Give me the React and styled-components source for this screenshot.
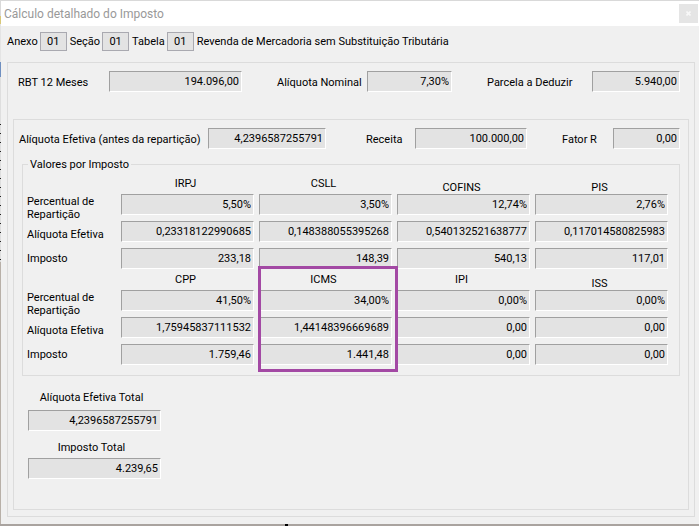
import { useId } from "react";
import styled, { createGlobalStyle, ThemeProvider } from "styled-components";

const theme = {
  colors: {
    face: "#f0f0f0",
    field: "#e3e3e3",
    line: "#dcdcdc",
    shadow: "#a0a0a0",
    title: "#999999",
    mark: "#a349a4",
  },
  fontsize: {
    md: "11px",
    lg: "12px",
  },
};

const GlobalStyle = createGlobalStyle`
  * {
    box-sizing: border-box;
  }

  body {
    margin: 0;
    background: #b8b0a8;
    color: #000;
    font-family: Tahoma, Roboto, sans-serif;
    font-size: ${theme.fontsize.md};
    line-height: 13px;
  }
`;

/* what shows of the screen behind the window */
const Desktop = styled.div`
  padding: 1px 0 2px 1px;
  background:
    linear-gradient(#000, #000) 41% 100% / 3px 2px no-repeat,
    linear-gradient(#a9a39f, #a9a39f) 0 100% / 100% 2px no-repeat,
    repeating-linear-gradient(transparent 0 8px, #222 8px 9px) 0 116px / 1px 146px no-repeat,
    linear-gradient(
      #d9d9d9 0 16px,
      #d8c878 16px 24px,
      #e4e4e4 24px 62px,
      #6f8fc0 62px 77px,
      #dedede 77px 262px,
      #b8b0a8 262px
    );
`;

const Window = styled.main`
  background: ${({ theme }) => theme.colors.face};
`;

const TitleBar = styled.header`
  display: flex;
  align-items: center;
  justify-content: space-between;
  height: 25px;
  padding: 0 1px 0 3px;
  background: #fff;
`;

const Title = styled.h1`
  margin: 0;
  color: ${({ theme }) => theme.colors.title};
  font-family: "Segoe UI", Roboto, sans-serif;
  font-size: ${({ theme }) => theme.fontsize.lg};
  font-weight: 400;
  line-height: 16px;
`;

const CloseButton = styled.button`
  display: flex;
  align-items: center;
  justify-content: center;
  width: 19px;
  height: 19px;
  padding: 0;
  border: 0;
  background: #e5e5e5;
`;

const Body = styled.div`
  padding: 6px 4px 7px 6px;
`;

const CodeBar = styled.div`
  display: flex;
  align-items: center;
  gap: 3px;
`;

const CodeLabel = styled.label`
  display: flex;
  align-items: center;
  gap: 2px;
`;

const CodeInput = styled.input`
  width: 27px;
  height: 19px;
  padding: 0;
  border: 1px solid #a9a9b0;
  background: ${({ theme }) => theme.colors.field};
  color: inherit;
  font: inherit;
  text-align: center;
  outline: none;
`;

const Panel = styled.section`
  margin-top: 11px;
  padding: 8px 5px 6px;
  border: 1px solid ${({ theme }) => theme.colors.line};
`;

const InnerPanel = styled.section`
  margin-top: 27px;
  padding: 8px 8px 30px 5px;
  border: 1px solid ${({ theme }) => theme.colors.line};
`;

const FieldRow = styled.div`
  display: grid;
  grid-template-columns: ${({ $columns }) => $columns};
  align-items: center;
  padding: ${({ $padding }) => $padding || 0};
`;

const Label = styled.label`
  padding-left: ${({ $inset }) => $inset || 0}px;
  padding-top: 2px;
  white-space: nowrap;
`;

const ValueInput = styled.input`
  width: 100%;
  min-width: 0;
  height: 21px;
  padding: 0 2px;
  border: 1px solid;
  border-color: ${({ theme }) => theme.colors.shadow} #fff #fff
    ${({ theme }) => theme.colors.shadow};
  background: ${({ theme }) => theme.colors.field};
  color: inherit;
  font: inherit;
  text-align: right;
  outline: none;
`;

const TaxGroup = styled.fieldset`
  min-width: 0;
  margin: 9px 0 0 3px;
  padding: 2px 11px 10px 4px;
  border: 1px solid ${({ theme }) => theme.colors.line};
`;

const Legend = styled.legend`
  margin-left: 1px;
  padding: 0 2px;
`;

const TaxGrid = styled.div`
  display: grid;
  grid-template-columns: 89px repeat(4, 1fr);
  grid-template-rows: 21px 27px 27px 21px;
  column-gap: 5px;
  position: relative;
`;

const TaxName = styled.span`
  align-self: ${({ $low }) => ($low ? "end" : "center")};
  padding-right: 4px;
  text-align: center;
`;

const RowName = styled.span`
  grid-column: 1;
  align-self: center;
`;

const Highlight = styled.div`
  position: absolute;
  inset: -3px -6px -7px -1px;
  grid-column: 3 / 4;
  grid-row: 1 / -1;
  border: 3px solid ${({ theme }) => theme.colors.mark};
  pointer-events: none;
`;

const Totals = styled.div`
  display: flex;
  flex-direction: column;
  width: 133px;
  margin: 15px 0 0 9px;
`;

const TotalLabel = styled.label`
  padding: ${({ $first }) => ($first ? "0 6px 6px 0" : "10px 6px 4px 0")};
  text-align: center;
`;

const rows = ["Percentual de Repartição", "Alíquota Efetiva", "Imposto"];

const firstTaxes = [
  { name: "IRPJ", values: ["5,50%", "0,23318122990685", "233,18"] },
  { name: "CSLL", values: ["3,50%", "0,148388055395268", "148,39"] },
  { name: "COFINS", low: true, values: ["12,74%", "0,540132521638777", "540,13"] },
  { name: "PIS", low: true, values: ["2,76%", "0,117014580825983", "117,01"] },
];

const secondTaxes = [
  { name: "CPP", values: ["41,50%", "1,75945837111532", "1.759,46"] },
  { name: "ICMS", values: ["34,00%", "1,44148396669689", "1.441,48"] },
  { name: "IPI", values: ["0,00%", "0,00", "0,00"] },
  { name: "ISS", low: true, values: ["0,00%", "0,00", "0,00"] },
];

const Code = ({ label, value }) => (
  <CodeLabel>
    {label}
    <CodeInput readOnly value={value} />
  </CodeLabel>
);

const Field = ({ label, value, inset }) => {
  const id = useId();

  return (
    <>
      <Label htmlFor={id} $inset={inset}>
        {label}
      </Label>
      <ValueInput id={id} readOnly value={value} />
    </>
  );
};

const Total = ({ label, value, first }) => {
  const id = useId();

  return (
    <>
      <TotalLabel htmlFor={id} $first={first}>
        {label}
      </TotalLabel>
      <ValueInput id={id} readOnly value={value} />
    </>
  );
};

const TaxTable = ({ taxes, children }) => {
  const id = useId();

  return (
    <TaxGrid>
      <span />
      {taxes.map((tax) => (
        <TaxName key={tax.name} id={`${id}-${tax.name}`} $low={tax.low}>
          {tax.name}
        </TaxName>
      ))}
      {rows.map((row, i) => [
        <RowName key={row} id={`${id}-row${i}`}>
          {row}
        </RowName>,
        ...taxes.map((tax) => (
          <ValueInput
            key={`${row}-${tax.name}`}
            aria-labelledby={`${id}-${tax.name} ${id}-row${i}`}
            readOnly
            value={tax.values[i]}
          />
        )),
      ])}
      {children}
    </TaxGrid>
  );
};

const App = () => {
  return (
    <ThemeProvider theme={theme}>
      <GlobalStyle />
      <Desktop>
        <Window>
          <TitleBar>
            <Title>Cálculo detalhado do Imposto</Title>
            <CloseButton aria-label="Fechar">
              <svg width="5" height="5" viewBox="0 0 5 5">
                <path d="M0.5 0.5 4.5 4.5M4.5 0.5 0.5 4.5" stroke="#f8f8f8" strokeWidth="1.6" />
              </svg>
            </CloseButton>
          </TitleBar>
          <Body>
            <CodeBar>
              <Code label="Anexo" value="01" />
              <Code label="Seção" value="01" />
              <Code label="Tabela" value="01" />
              <span>Revenda de Mercadoria sem Substituição Tributária</span>
            </CodeBar>
            <Panel>
              <FieldRow
                $columns="91px 133fr 125px 85fr 140px 88fr"
                $padding="0 9px 0 5px"
              >
                <Field label="RBT 12 Meses" value="194.096,00" />
                <Field label="Alíquota Nominal" value="7,30%" inset={35} />
                <Field label="Parcela a Deduzir" value="5.940,00" inset={35} />
              </FieldRow>
              <InnerPanel>
                <FieldRow $columns="189px 118fr 89px 112fr 86px 67fr">
                  <Field label="Alíquota Efetiva (antes da repartição)" value="4,2396587255791" />
                  <Field label="Receita" value="100.000,00" inset={40} />
                  <Field label="Fator R" value="0,00" inset={35} />
                </FieldRow>
                <TaxGroup>
                  <Legend>Valores por Imposto</Legend>
                  <TaxTable taxes={firstTaxes} />
                  <TaxTable taxes={secondTaxes}>
                    <Highlight />
                  </TaxTable>
                </TaxGroup>
                <Totals>
                  <Total label="Alíquota Efetiva Total" value="4,2396587255791" first />
                  <Total label="Imposto Total" value="4.239,65" />
                </Totals>
              </InnerPanel>
            </Panel>
          </Body>
        </Window>
      </Desktop>
    </ThemeProvider>
  );
};

export default App;
